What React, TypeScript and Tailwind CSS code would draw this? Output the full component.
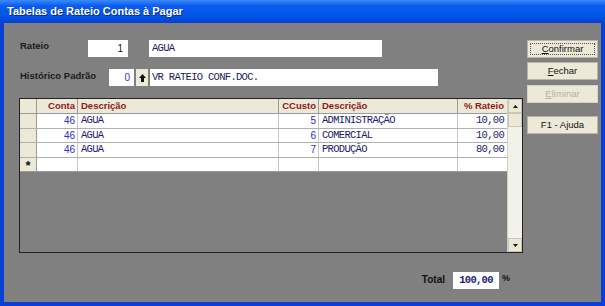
const rows = [
  { conta: "46", desc: "AGUA", ccusto: "5", desc2: "ADMINISTRAÇÃO", rateio: "10,00" },
  { conta: "46", desc: "AGUA", ccusto: "6", desc2: "COMERCIAL", rateio: "10,00" },
  { conta: "46", desc: "AGUA", ccusto: "7", desc2: "PRODUÇÃO", rateio: "80,00" },
]

const sans = "font-['Liberation_Sans',Arial,sans-serif]"
const mono = "font-['Liberation_Mono','Courier_New',monospace] text-[10.5px] tracking-[-0.7px]"

const Btn = ({ children, def, disabled }: { children: React.ReactNode; def?: boolean; disabled?: boolean }) => (
  <div
    className={`h-[18px] w-[71px] flex items-center justify-center bg-[#ece9d8] text-[9.5px] ${sans} ${
      disabled ? "text-[#b5b2a2] border border-[#d6d3c4]" : "text-[#111] border border-[#b9b6a6]"
    } ${def ? "border-[#1a1a1a]" : ""}`}
  >
    {def ? (
      <div className="w-[65px] h-[12px] border border-dotted border-[#555] flex items-center justify-center">{children}</div>
    ) : (
      children
    )}
  </div>
)

const App = () => {
  return (
    <div className="w-[605px] h-[306px] flex flex-col bg-[#0a3fd8]">
      {/* title bar */}
      <div className="h-[23px] shrink-0 flex items-center pl-[7px] bg-[linear-gradient(#3a8cfa_0%,#0b5cf0_25%,#0055e6_70%,#0a3fd0_100%)]">
        <span className={`text-white text-[11px] font-bold ${sans} [text-shadow:1px_1px_0_#0a2a8a]`}>
          Tabelas de Rateio Contas à Pagar
        </span>
      </div>

      {/* body */}
      <div className="flex-1 mx-[4px] mb-[4px] bg-[#808080] flex pl-[15px] pt-[17px] gap-[4px]">
        <div className="w-[504px] flex flex-col">
          {/* rateio row */}
          <div className="h-[17px] flex items-center">
            <span className={`w-[69px] pl-[1px] text-[9.5px] font-bold text-[#1a1a1a] ${sans} -mt-[4px]`}>Rateio</span>
            <div className={`w-[40px] h-[17px] bg-white flex items-center justify-end pr-[5px] text-[10px] text-[#111] ${sans}`}>1</div>
            <div className={`ml-[21px] w-[233px] h-[17px] bg-white flex items-center pl-[3px] text-[#1c1c5e] ${mono}`}>AGUA</div>
          </div>

          {/* historico row */}
          <div className="h-[17px] mt-[12px] flex items-center">
            <span className={`w-[90px] pl-[1px] text-[9.5px] font-bold text-[#1a1a1a] ${sans} -mt-[3px]`}>Histórico Padrão</span>
            <div className={`w-[25px] h-[17px] bg-white flex items-center justify-end pr-[4px] text-[10px] text-[#3434c8] ${sans}`}>0</div>
            <div className="ml-[2px] w-[12px] h-[17px] bg-[#ece9d8] flex items-center justify-center">
              <svg width="7" height="8" viewBox="0 0 7 8">
                <path d="M3.5 0 L7 4 L0 4 Z" fill="#111" />
                <rect x="2" y="4" width="3" height="4" fill="#111" />
              </svg>
            </div>
            <div className={`ml-[2px] w-[288px] h-[17px] bg-white flex items-center pl-[2px] text-[#1c1c5e] ${mono}`}>
              VR RATEIO CONF.DOC.
            </div>
          </div>

          {/* grid */}
          <div className="mt-[12px] w-[504px] h-[155px] border border-[#222] flex">
            <div className="w-[487px] flex flex-col">
              <div className={`h-[15px] flex bg-[#ece9d8] border-b border-[#9a9a9a] text-[9.5px] font-bold text-[#8e1a1a] ${sans}`}>
                <div className="w-[17px] border-r border-[#9a9a9a]" />
                <div className="w-[41px] border-r border-[#9a9a9a] text-right pr-[2px] leading-[14px]">Conta</div>
                <div className="w-[201px] border-r border-[#9a9a9a] pl-[3px] leading-[14px]">Descrição</div>
                <div className="w-[40px] border-r border-[#9a9a9a] text-right pr-[2px] leading-[14px]">CCusto</div>
                <div className="w-[139px] border-r border-[#9a9a9a] pl-[3px] leading-[14px]">Descrição</div>
                <div className="w-[49px] text-right pr-[3px] leading-[14px] whitespace-nowrap">% Rateio</div>
              </div>
              {rows.map((r, i) => (
                <div key={i} className="h-[14.5px] flex bg-white border-b border-[#b0b0b0]">
                  <div className="w-[17px] bg-[#ece9d8] border-r border-[#9a9a9a]" />
                  <div className={`w-[41px] border-r border-[#c8c8c8] text-right pr-[2px] text-[10px] leading-[13px] text-[#2c2cc0] ${sans}`}>{r.conta}</div>
                  <div className={`w-[201px] border-r border-[#c8c8c8] pl-[3px] leading-[13px] text-[#1c1c6e] ${mono}`}>{r.desc}</div>
                  <div className={`w-[40px] border-r border-[#c8c8c8] text-right pr-[2px] text-[10px] leading-[13px] text-[#2c2cc0] ${sans}`}>{r.ccusto}</div>
                  <div className={`w-[139px] border-r border-[#c8c8c8] pl-[3px] leading-[13px] text-[#1c1c6e] ${mono}`}>{r.desc2}</div>
                  <div className={`w-[49px] text-right pr-[3px] leading-[13px] text-[#1c1c6e] ${mono}`}>{r.rateio}</div>
                </div>
              ))}
              <div className="h-[14px] flex bg-white border-b border-[#9a9a9a]">
                <div className={`w-[17px] bg-[#ece9d8] border-r border-[#9a9a9a] text-center text-[13px] font-bold leading-[16px] text-[#111] ${sans}`}>*</div>
                <div className="w-[41px] border-r border-[#c8c8c8]" />
                <div className="w-[201px] border-r border-[#c8c8c8]" />
                <div className="w-[40px] border-r border-[#c8c8c8]" />
                <div className="w-[139px] border-r border-[#c8c8c8]" />
                <div className="w-[49px]" />
              </div>
            </div>
            {/* scrollbar */}
            <div className="w-[16px] bg-[#f3f2ea] border-l border-[#d0cfc4] flex flex-col">
              <div className="h-[14px] bg-[#ece9d8] border border-[#c9c6b6] flex items-center justify-center">
                <svg width="5" height="3" viewBox="0 0 5 3"><path d="M2.5 0 L5 3 L0 3 Z" fill="#111" /></svg>
              </div>
              <div className="h-[14px] bg-[#ece9d8] border border-[#c9c6b6]" />
              <div className="flex-1" />
              <div className="h-[14px] bg-[#ece9d8] border border-[#c9c6b6] flex items-center justify-center">
                <svg width="5" height="3" viewBox="0 0 5 3"><path d="M0 0 L5 0 L2.5 3 Z" fill="#111" /></svg>
              </div>
            </div>
          </div>

          {/* total */}
          <div className="mt-[19px] h-[17px] flex items-center justify-end">
            <span className={`text-[10px] font-bold text-[#111] ${sans} mr-[8px] -mt-[2px]`}>Total</span>
            <div className="w-[46px] h-[17px] bg-white flex items-center justify-center font-['Liberation_Mono',monospace] text-[10.5px] font-bold tracking-[-0.7px] text-[#1c1c7a]">
              100,00
            </div>
            <span className={`ml-[3px] w-[21px] self-start text-[9px] font-bold text-[#111] ${sans}`}>%</span>
          </div>
        </div>

        {/* buttons */}
        <div className="flex flex-col">
          <Btn def>
            <span><u>C</u>onfirmar</span>
          </Btn>
          <div className="mt-[4px]">
            <Btn><span><u>F</u>echar</span></Btn>
          </div>
          <div className="mt-[5px]">
            <Btn disabled><span><u>E</u>liminar</span></Btn>
          </div>
          <div className="mt-[13px]">
            <Btn>F1 - Ajuda</Btn>
          </div>
        </div>
      </div>
    </div>
  )
}

export default App
